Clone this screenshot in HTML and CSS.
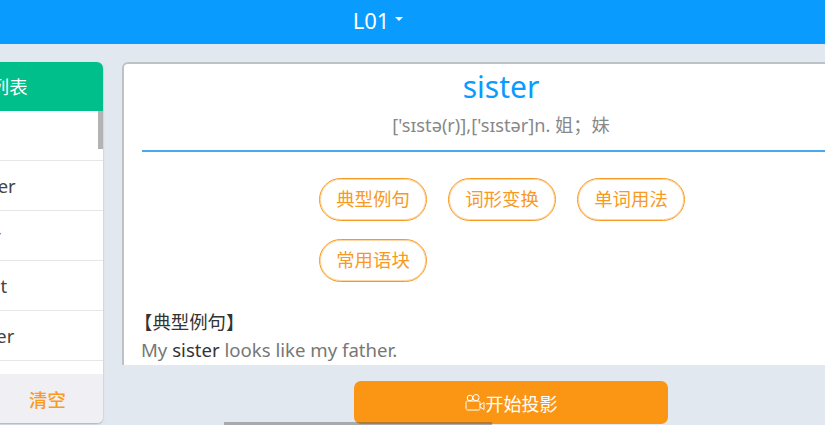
FILE: index.html
```html
<!DOCTYPE html>
<html lang="zh-CN">
<head>
    <meta charset="UTF-8">
    <title>单词投影</title>
    <link rel="stylesheet" href="styles.css">
</head>
<body>
    <header class="topbar">
        <span class="lesson">L01<i class="caret"></i></span>
    </header>

    <div class="layout">
        <aside class="sidebar">
            <div class="side-head">单词列表</div>
            <div class="side-body">
                <ul class="word-list">
                    <li>sister</li>
                    <li>brother</li>
                    <li>junior</li>
                    <li>parent</li>
                    <li>mother</li>
                </ul>
                <div class="thumb"></div>
            </div>
            <div class="side-foot">清空</div>
        </aside>

        <div class="right">
            <div class="card-clip">
                <main class="card">
                    <h1 class="word">sister</h1>
                    <p class="phonetic">['sɪstə(r)],['sɪstər]n. 姐；妹</p>
                    <div class="tabs">
                        <a class="tab">典型例句</a>
                        <a class="tab">词形变换</a>
                        <a class="tab">单词用法</a>
                        <a class="tab">常用语块</a>
                    </div>
                    <h2 class="sec-title">【典型例句】</h2>
                    <p class="sentence">My <b>sister</b> looks like my father.</p>
                </main>
            </div>
            <div class="actions">
                <button class="start">
                    <svg class="cam" viewBox="0 0 20 17" width="20" height="17" fill="none" stroke="#fff" stroke-width="1">
                        <circle cx="5" cy="4" r="2.8"/>
                        <circle cx="11" cy="3.6" r="3.1"/>
                        <rect x="1" y="7" width="14" height="9" rx="1.5"/>
                        <path d="M15 11l4-2.5v7L15 13"/>
                    </svg>开始投影
                </button>
            </div>
        </div>
    </div>

    <div class="hscroll"></div>
</body>
</html>
```

FILE: styles.css
```css
* {
    box-sizing: border-box;
}
html, body {
    margin: 0;
    height: 425px;
    overflow: hidden;
}
body {
    position: relative;
    background: #e2e8ef;
    font-family: "Noto Sans", "Noto Sans CJK SC", sans-serif;
    color: #777;
}
.topbar {
    height: 44px;
    padding: 0 69px 4px 0;
    background: #0a9bff;
    color: #fff;
    display: flex;
    align-items: center;
    justify-content: center;
}
.lesson {
    font-size: 22px;
    display: flex;
    align-items: center;
}
.caret {
    width: 0;
    height: 0;
    margin-left: 6px;
    margin-bottom: 3px;
    border-left: 4.5px solid transparent;
    border-right: 4.5px solid transparent;
    border-top: 4px solid #fff;
}
.layout {
    display: flex;
    align-items: flex-start;
    gap: 19px;
    padding-top: 18px;
}
.sidebar {
    flex: none;
    width: 200px;
    height: 361px;
    margin-left: -97px;
    display: flex;
    flex-direction: column;
    background: #fff;
    border-radius: 6px;
    overflow: hidden;
    box-shadow: 0 1px 2px rgba(0, 0, 0, 0.25);
}
.side-head {
    height: 49px;
    flex: none;
    padding: 1px 0 0 51px;
    line-height: 48px;
    font-size: 18.4px;
    color: #fff;
    background: #00bf8b;
}
.side-body {
    position: relative;
    flex: 1;
    overflow: hidden;
}
.word-list {
    list-style: none;
    margin: 0;
    padding: 0;
}
.word-list li {
    height: 50px;
    line-height: 50px;
    padding-left: 47px;
    font-size: 18.4px;
    color: #444;
    border-bottom: 1px solid #e6e6e6;
}
.thumb {
    position: absolute;
    top: 0;
    right: 0;
    width: 5px;
    height: 38px;
    background: #b3b3b3;
}
.side-foot {
    height: 49px;
    flex: none;
    padding-left: 126px;
    line-height: 51px;
    font-size: 18.4px;
    font-weight: 500;
    color: #fb9a1e;
    background: #efeff4;
}
.right {
    flex: none;
    width: 760px;
}
.card-clip {
    height: 303px;
    overflow: hidden;
}
.card {
    height: 400px;
    padding: 0 22px 0 18px;
    background: #fff;
    border-style: solid;
    border-color: #bfc2c5;
    border-width: 2px 0 0 2px;
    border-radius: 6px 0 0 0;
}
.word {
    margin: 0;
    height: 46px;
    line-height: 46px;
    font-size: 30px;
    font-weight: 400;
    text-align: center;
    color: #0a9bff;
}
.phonetic {
    margin: 0;
    height: 42px;
    line-height: 30px;
    font-size: 18.2px;
    text-align: center;
    color: #888;
    border-bottom: 2px solid #4aa8ef;
}
.tabs {
    display: flex;
    flex-wrap: wrap;
    gap: 18px 21px;
    width: 400px;
    margin: 26px 0 0 177px;
}
.tab {
    width: 108px;
    height: 43px;
    line-height: 40px;
    text-align: center;
    font-size: 18.4px;
    color: #f79a1f;
    border: 1px solid #f79a1f;
    border-radius: 22px;
    box-shadow: inset 0 0 0 1px rgba(247, 154, 31, 0.4);
}
.sec-title {
    margin: 26px 0 0 -8px;
    height: 28px;
    line-height: 28px;
    font-size: 18.4px;
    font-weight: 400;
    color: #333;
}
.sentence {
    margin: 0 0 0 -1px;
    height: 28px;
    line-height: 28px;
    font-size: 18.6px;
    color: #777;
}
.sentence b {
    font-weight: 400;
    color: #333;
}
.actions {
    padding: 16px 0 0 232px;
}
.start {
    display: flex;
    align-items: center;
    justify-content: center;
    width: 314px;
    height: 43px;
    padding: 0;
    font-family: inherit;
    font-size: 18px;
    color: #fff;
    background: #fb9614;
    border: none;
    border-radius: 7px;
}
.cam {
    margin-right: 1px;
}
.hscroll {
    position: absolute;
    left: 224px;
    bottom: 0;
    width: 268px;
    height: 3px;
    background: rgba(80, 80, 80, 0.4);
}
```
